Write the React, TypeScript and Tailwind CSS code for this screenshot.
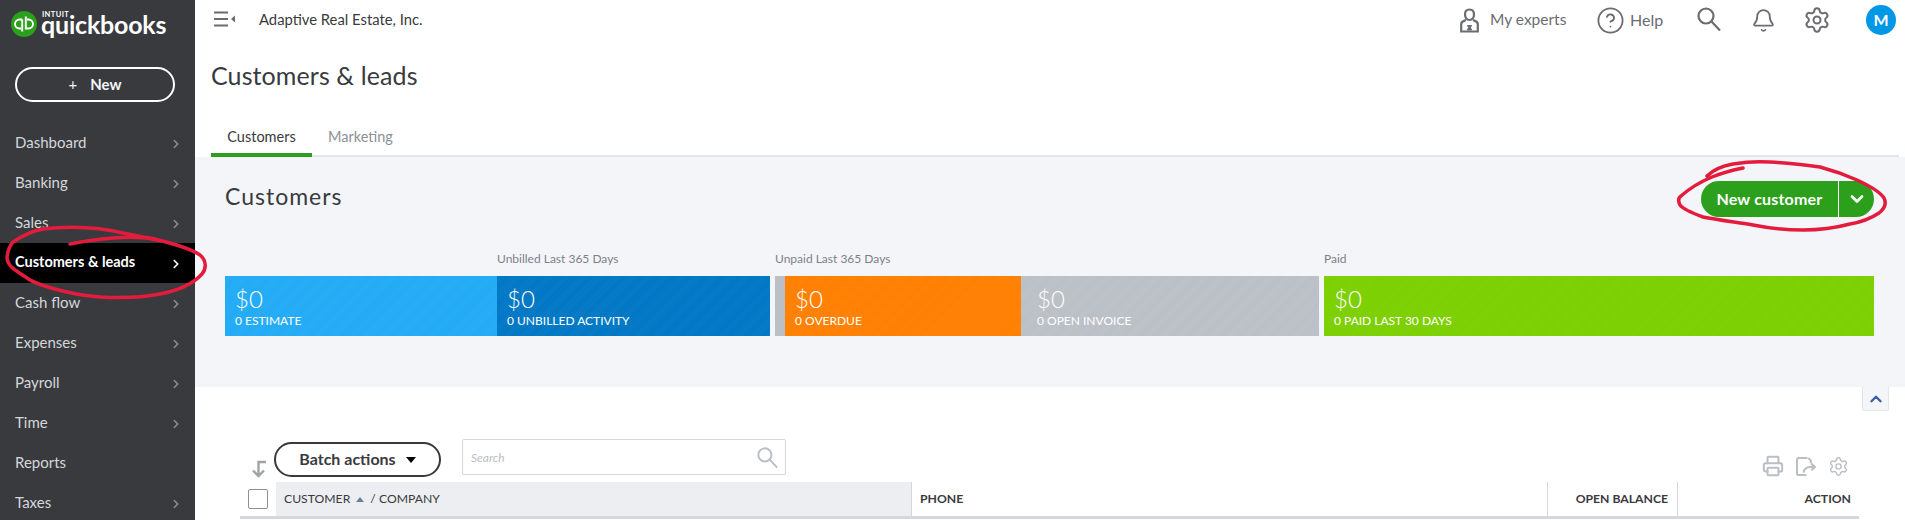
import React from "react";
import { Bell, ChevronDown, ChevronRight, ChevronUp, CircleHelp, Printer, Settings } from "lucide-react";

const navItems = ["Dashboard", "Banking", "Sales", "Customers & leads", "Cash flow", "Expenses", "Payroll", "Time", "Reports", "Taxes"];
const noChevron = ["Reports"];

const hatch =
  "bg-[repeating-linear-gradient(135deg,rgba(255,255,255,0.035)_0,rgba(255,255,255,0.035)_1px,transparent_1px,transparent_2px)]";

function SearchGlyph({ color, className }: { color: string; className?: string }) {
  return (
    <svg width="24" height="24" viewBox="0 0 24 24" fill="none" stroke={color} strokeWidth="2.200" className={className}>
      <circle cx="9" cy="9" r="7.500" />
      <path d="M14.500 14.500 23 23.500" />
    </svg>
  );
}

function Tile({ label, className }: { label: string; className: string }) {
  return (
    <div className={`h-[60px] pl-[10px] pt-[11px] text-white ${hatch} ${className}`}>
      <div className="text-[24px] font-light leading-[24px]">$0</div>
      <div className="mt-[1px] text-[12px] leading-[18px]">{label}</div>
    </div>
  );
}

function Sidebar() {
  return (
    <aside className="flex h-[520px] w-[195px] shrink-0 flex-col overflow-hidden bg-[#393a3d]">
      <div className="flex h-[67px] shrink-0 items-start pl-[11px] pt-[11px]">
        <svg width="26" height="26" viewBox="0 0 26 26" className="shrink-0">
          <circle cx="13" cy="13" r="13" fill="#2ca01c" />
          <path d="M11.200 8.500H8.500a4.500 4.500 0 0 0 0 9H10M11.200 8.500V20.500" fill="none" stroke="#fff" strokeWidth="1.900" />
          <path d="M14.800 5.500V17.500H17.500a4.500 4.500 0 0 0 0-9H16" fill="none" stroke="#fff" strokeWidth="1.900" />
        </svg>
        <div className="ml-[4px] flex w-[126px] flex-col">
          <span className="pl-[1px] text-[7.5px] font-bold leading-[7px] tracking-[0.4px] text-white">INTUIT</span>
          <span className="text-[25px] font-bold leading-[12px] tracking-[-0.2px] text-white">quickbooks</span>
        </div>
      </div>
      <button className="mx-[15px] flex h-[35px] w-[160px] shrink-0 items-center justify-center rounded-full border-2 border-white text-[15px] font-bold text-[#f4f5f8]">
        <span className="mr-[13px] text-[15px] font-normal">+</span>New
      </button>
      <nav className="mt-[21px]">
        {navItems.map((item) => {
          const active = item === "Customers & leads";
          return (
            <div
              key={item}
              className={`flex h-[40px] items-center justify-between pb-[2px] pl-[15px] pr-[12px] ${
                active ? "bg-black text-[14.5px] font-bold text-white" : "text-[15px] text-[#d4d7dc]"
              }`}
            >
              <span>{item}</span>
              {!noChevron.includes(item) && (
                <ChevronRight
                  size={14}
                  strokeWidth={active ? 3 : 2.5}
                  className={`mt-[3px] ${active ? "text-white" : "text-[#8d9096]"}`}
                />
              )}
            </div>
          );
        })}
      </nav>
    </aside>
  );
}

function TopBar() {
  return (
    <header className="flex h-[40px] items-center text-[#6b6c72]">
      <svg width="22" height="16" viewBox="0 0 22 16" className="ml-[19px] mt-[-2px]">
        <path d="M0 1.500H14M0 8H14M0 14.500H14" stroke="#6b6c72" strokeWidth="2" />
        <path d="M21 4.500V11.500L17 8Z" fill="#6b6c72" />
      </svg>
      <span className="ml-[23px] mt-[-2px] text-[14.8px] text-[#393a3d]">Adaptive Real Estate, Inc.</span>
      <div className="ml-auto flex items-center pr-[9px]">
        <svg width="19" height="25" viewBox="0 0 19 25" fill="none" stroke="#6b6c72" strokeWidth="2.200">
          <path d="M9.500 1.500c3 0 4.500 2.200 4.500 5s-1.800 5.500-4.500 5.500S5 9.300 5 6.500s1.500-5 4.500-5Z" />
          <path d="M6 12c-2.500 1-4.800 1.500-4.800 4V23.500H17.800V16c0-2.500-2.300-3-4.800-4" />
          <path d="M7.500 17.500h4L10.500 19.500 11.500 22h-4L8.500 19.500Z" fill="#6b6c72" strokeWidth="1" />
        </svg>
        <span className="ml-[11px] w-[76px] whitespace-nowrap text-[15.5px]">My experts</span>
        <CircleHelp size={29} strokeWidth={1.5} className="ml-[30px]" />
        <span className="ml-[5px] w-[33px] text-[16px]">Help</span>
        <SearchGlyph color="#6b6c72" className="ml-[34px] mt-[-2px]" />
        <Bell size={25} strokeWidth={1.7} className="ml-[30px]" />
        <Settings size={28} strokeWidth={1.7} className="ml-[27px]" />
        <div className="ml-[35px] flex h-[30px] w-[30px] items-center justify-center rounded-full bg-[#0097e6] text-[16px] font-bold text-white">
          M
        </div>
      </div>
    </header>
  );
}

function Summary() {
  return (
    <section className="h-[230px] bg-[#f4f5f8] pl-[30px] pr-[31px]">
      <div className="flex h-[60px] items-start justify-between pt-[24px]">
        <h2 className="text-[23px] leading-[30px] tracking-[1px] text-[#393a3d]">Customers</h2>
        <div className="flex h-[36px] w-[173px] overflow-hidden rounded-full bg-[#2ca01c] text-white">
          <div className="flex w-[137px] items-center justify-center text-[16px] font-bold tracking-[0.2px]">New customer</div>
          <div className="flex flex-1 items-center justify-center border-l border-white">
            <ChevronDown size={20} strokeWidth={3.2} />
          </div>
        </div>
      </div>
      <div className="mt-[31px] flex gap-[5px]">
        <div className="flex">
          <div className="w-[272px]">
            <div className="h-[28px]" />
            <Tile label="0 ESTIMATE" className="bg-[#21abf6]" />
          </div>
          <div className="w-[273px]">
            <div className="h-[28px] text-[12px] leading-[22px] text-[#7c7f8a]">Unbilled Last 365 Days</div>
            <Tile label="0 UNBILLED ACTIVITY" className="bg-[#0077c5]" />
          </div>
        </div>
        <div className="w-[544px]">
          <div className="h-[28px] text-[12px] leading-[22px] text-[#7c7f8a]">Unpaid Last 365 Days</div>
          <div className={`flex bg-[#babec5] pl-[10px] ${hatch}`}>
            <Tile label="0 OVERDUE" className="w-[236px] bg-[#ff8000]" />
            <Tile label="0 OPEN INVOICE" className="flex-1 pl-[16px]" />
          </div>
        </div>
        <div className="flex-1">
          <div className="h-[28px] text-[12px] leading-[22px] text-[#7c7f8a]">Paid</div>
          <Tile label="0 PAID LAST 30 DAYS" className="bg-[#7ccf00]" />
        </div>
      </div>
    </section>
  );
}

function CustomerTable() {
  return (
    <section className="relative pl-[45px] pr-[46px]">
      <div className="absolute right-[16px] top-0 flex h-[24px] w-[27px] items-center justify-center rounded-b-[2px] border border-t-0 border-[#e3e5e8] bg-[#f4f5f8]">
        <ChevronUp size={18} strokeWidth={3.2} className="text-[#3d5fa8]" />
      </div>
      <div className="flex h-[95px] items-start pt-[52px]">
        <svg width="16" height="18" viewBox="0 0 16 18" className="ml-[11px] mt-[21px] shrink-0">
          <path d="M15 2H7.500V15M2 10.500 7.500 16 13 10.500" fill="none" stroke="#a0a2a6" strokeWidth="2.400" />
        </svg>
        <button className="ml-[7px] mt-[3px] flex h-[35px] w-[167px] shrink-0 items-center justify-center rounded-full border-2 border-[#393a3d] pb-[2px] text-[16px] font-bold text-[#393a3d]">
          Batch actions
          <span className="ml-[10px] mt-[2px] h-0 w-0 border-x-[5px] border-t-[6px] border-x-transparent border-t-black" />
        </button>
        <div className="ml-[21px] flex h-[36px] w-[324px] shrink-0 items-center justify-between rounded-[2px] border border-[#d4d7dc] pl-[8px] pr-[7px]">
          <span className="pt-[1px] text-[12px] italic text-[#babec5]">Search</span>
          <SearchGlyph color="#babec5" className="h-[21px] w-[21px]" />
        </div>
        <div className="ml-auto mr-[10px] mt-[16px] flex items-center gap-[12px] text-[#babec5]">
          <Printer size={22} strokeWidth={2.2} />
          <svg width="20" height="21" viewBox="0 0 21 21" fill="none" stroke="#babec5" strokeWidth="2.200">
            <path d="M12 1.500H3a2 2 0 0 0-2 2v14a2 2 0 0 0 2 2h8M13 1.500 15.500 4V7" />
            <path d="M8 17c.5-4 3-6 7-6h4M16 7.500 20 11l-4 3.500" />
          </svg>
          <Settings size={21} strokeWidth={1.6} />
        </div>
      </div>
      <div className="flex h-[37px] border-b-[3px] border-[#d4d7dc] text-[12.2px] leading-[34px]">
        <div className="flex w-[36px] items-center justify-center">
          <div className="h-[20px] w-[20px] rounded-[2px] border border-[#8d9096] bg-white" />
        </div>
        <div className="flex w-[635px] items-center bg-[#eceef1] pl-[8px] text-[#393a3d]">
          CUSTOMER
          <span className="mx-[6px] h-0 w-0 border-x-[4px] border-b-[5px] border-x-transparent border-b-[#6b7f99]" />
          / COMPANY
        </div>
        <div className="w-[636px] border-l border-[#d4d7dc] pl-[8px] font-bold text-[#393a3d]">PHONE</div>
        <div className="w-[130px] border-l border-[#d4d7dc] pr-[9px] text-right font-bold text-[#393a3d]">OPEN BALANCE</div>
        <div className="flex-1 border-l border-[#d4d7dc] pr-[8px] text-right font-bold text-[#393a3d]">ACTION</div>
      </div>
    </section>
  );
}

export default function App() {
  return (
    <div className="relative flex h-[520px] w-[1905px] overflow-hidden bg-white font-['Lato',sans-serif]">
      <Sidebar />
      <main className="min-w-0 flex-1">
        <TopBar />
        <h1 className="ml-[16px] mt-[18px] text-[25px] leading-[34px] tracking-[0.1px] text-[#393a3d]">Customers &amp; leads</h1>
        <div className="ml-[16px] mr-[6px] mt-[27px] flex h-[38px] border-b-2 border-[#e3e5e8] text-[14.5px]">
          <div className="h-[38px] w-[101px] border-b-4 border-[#2ca01c] pt-[7px] text-center text-[#393a3d]">Customers</div>
          <div className="ml-[16px] pt-[7px] text-[#8d9096]">Marketing</div>
        </div>
        <Summary />
        <CustomerTable />
      </main>
      <svg width="1905" height="520" viewBox="0 0 1905 520" fill="none" className="pointer-events-none absolute left-0 top-0">
        <path
          d="M70 244C95 239 125 236 147 238C165 241 190 248 200 255C206 260 207 268 202 274C192 285 176 291 160 294C140 298 118 298 100 297C88 296 75 294 67 292C50 288 35 284 27 278C15 270 7 266 7 257C8 250 9 246 13 242C22 236 32 231 43 229C58 227 74 227 90 228C103 229 115 231 123 233C133 235 142 237 150 238C160 240 170 243 177 245"
          stroke="#e31c3d"
          strokeWidth="3.500"
          strokeLinecap="round"
        />
        <path
          d="M1707 176C1713 170 1722 166 1733 164C1745 162 1757 161 1770 162C1788 163 1805 165 1820 167C1835 171 1848 176 1857 180C1870 186 1880 192 1884 198C1887 204 1884 209 1879 213C1870 219 1862 222 1850 224C1835 228 1818 230 1803 230C1785 230 1768 228 1753 225C1735 222 1718 220 1703 217C1692 213 1683 209 1680 205C1678 201 1678 198 1681 196C1690 188 1700 182 1712 177C1722 173 1733 170 1743 168"
          stroke="#e31c3d"
          strokeWidth="3.500"
          strokeLinecap="round"
        />
      </svg>
    </div>
  );
}
